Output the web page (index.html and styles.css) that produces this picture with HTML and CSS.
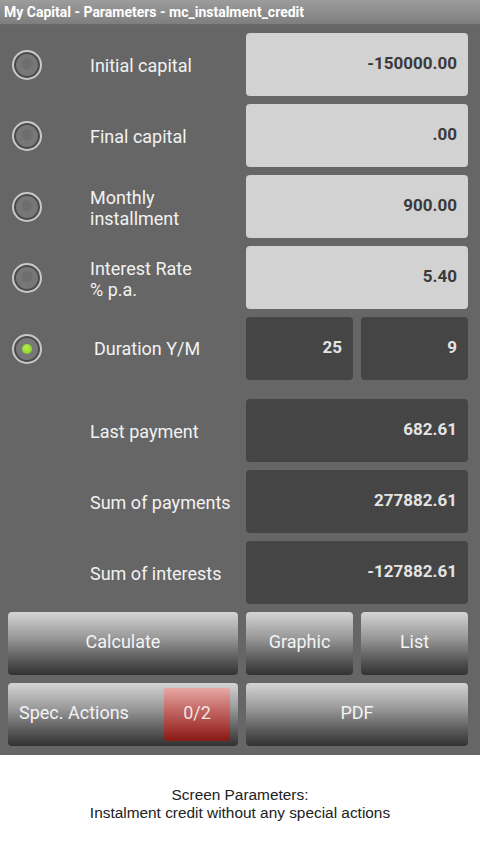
FILE: index.html
```html
<!DOCTYPE html>
<html>
<head>
<meta charset="utf-8">
<link rel="stylesheet" href="styles.css">
</head>
<body>
<div class="title">My Capital - Parameters - mc_instalment_credit</div>
<div class="main">
  <div class="grid">
    <div class="label-cell"><span class="radio"></span><span class="label">Initial capital</span></div>
    <div class="field light">-150000.00</div>

    <div class="label-cell"><span class="radio"></span><span class="label">Final capital</span></div>
    <div class="field light">.00</div>

    <div class="label-cell"><span class="radio"></span><span class="label">Monthly<br>installment</span></div>
    <div class="field light">900.00</div>

    <div class="label-cell"><span class="radio"></span><span class="label">Interest Rate<br>% p.a.</span></div>
    <div class="field light">5.40</div>

    <div class="label-cell"><span class="radio on"></span><span class="label dur">Duration Y/M</span></div>
    <div class="split">
      <div class="field dark">25</div>
      <div class="field dark">9</div>
    </div>
  </div>
  <div class="grid results">
    <div class="label-cell"><span class="label plain">Last payment</span></div>
    <div class="field dark">682.61</div>

    <div class="label-cell"><span class="label plain">Sum of payments</span></div>
    <div class="field dark">277882.61</div>

    <div class="label-cell"><span class="label plain">Sum of interests</span></div>
    <div class="field dark">-127882.61</div>

    <div class="btn">Calculate</div>
    <div class="split">
      <div class="btn">Graphic</div>
      <div class="btn">List</div>
    </div>

    <div class="btn spec"><span class="spec-text">Spec. Actions</span><span class="badge">0/2</span></div>
    <div class="btn">PDF</div>
  </div>
</div>
<div class="caption">Screen Parameters:<br>Instalment credit without any special actions</div>
</body>
</html>
```
FILE: styles.css
```css
html, body {
  margin: 0;
  padding: 0;
  background: #ffffff;
}
body {
  width: 480px;
  height: 854px;
  font-family: Roboto, "Noto Sans", sans-serif;
}
.title {
  height: 25px;
  line-height: 24px;
  padding-left: 4px;
  background: linear-gradient(#9c9c9c, #7e7e7e);
  color: #ffffff;
  font-weight: bold;
  font-size: 14px;
  border-bottom: 1px solid #6a6a6a;
  box-sizing: border-box;
}
.main {
  background: #666666;
  padding: 8px 12px 9px 8px;
}
.grid {
  display: grid;
  grid-template-columns: 230px 222px;
  grid-auto-rows: 63px;
  gap: 8px;
}
.results {
  margin-top: 19px;
}
.label-cell {
  display: flex;
  align-items: center;
}
.radio {
  width: 26px;
  height: 26px;
  margin-left: 4px;
  border-radius: 50%;
  border: 2px solid #c8c8c8;
  box-shadow: inset 0 0 0 2px #4a4a4a;
  background: radial-gradient(circle at 50% 45%, #6e6e6e 0, #6e6e6e 5px, #777777 6px, #777777 100%);
  box-sizing: content-box;
  display: flex;
  align-items: center;
  justify-content: center;
  flex: none;
}
.radio.on {
  background: #777777;
}
.radio.on::after {
  content: "";
  width: 10px;
  height: 10px;
  border-radius: 50%;
  background: radial-gradient(circle at 45% 40%, #b8f050, #7cc420);
}
.label {
  margin-left: 48px;
  padding-top: 2px;
  color: #f2f2f2;
  font-size: 18px;
  line-height: 21px;
}
.label.dur {
  margin-left: 52px;
  padding-top: 0;
}
.label.plain {
  margin-left: 82px;
}
.field {
  border-radius: 4px;
  display: flex;
  align-items: center;
  justify-content: flex-end;
  padding-right: 11px;
  font-weight: bold;
  font-size: 17px;
  padding-bottom: 3px;
  box-sizing: border-box;
}
.light {
  background: #d2d2d2;
  color: #3a3a3a;
}
.dark {
  background: #454545;
  color: #e4e4e4;
}
.split {
  display: grid;
  grid-template-columns: 107px 107px;
  gap: 8px;
}
.btn {
  border-radius: 4px;
  background: linear-gradient(#d4d4d4 0%, #9a9a9a 40%, #5a5a5a 75%, #323232 100%);
  color: #f4f4f4;
  font-size: 18px;
  display: flex;
  align-items: center;
  justify-content: center;
  padding-bottom: 5px;
  box-sizing: border-box;
}
.btn.spec {
  justify-content: space-between;
  padding: 5px 8px 5px 11px;
  align-items: stretch;
}
.spec-text {
  display: flex;
  align-items: center;
  padding-bottom: 5px;
}
.badge {
  width: 66px;
  border-radius: 3px;
  background: linear-gradient(#e8a8a4 0%, #c46a66 40%, #a43a36 75%, #881814 100%);
  color: #f4e4e4;
  display: flex;
  align-items: center;
  justify-content: center;
  padding-bottom: 5px;
  box-sizing: border-box;
}
.caption {
  text-align: center;
  font-family: "Liberation Sans", Arial, sans-serif;
  font-size: 15.4px;
  line-height: 18px;
  color: #222222;
  padding-top: 31px;
}
```
